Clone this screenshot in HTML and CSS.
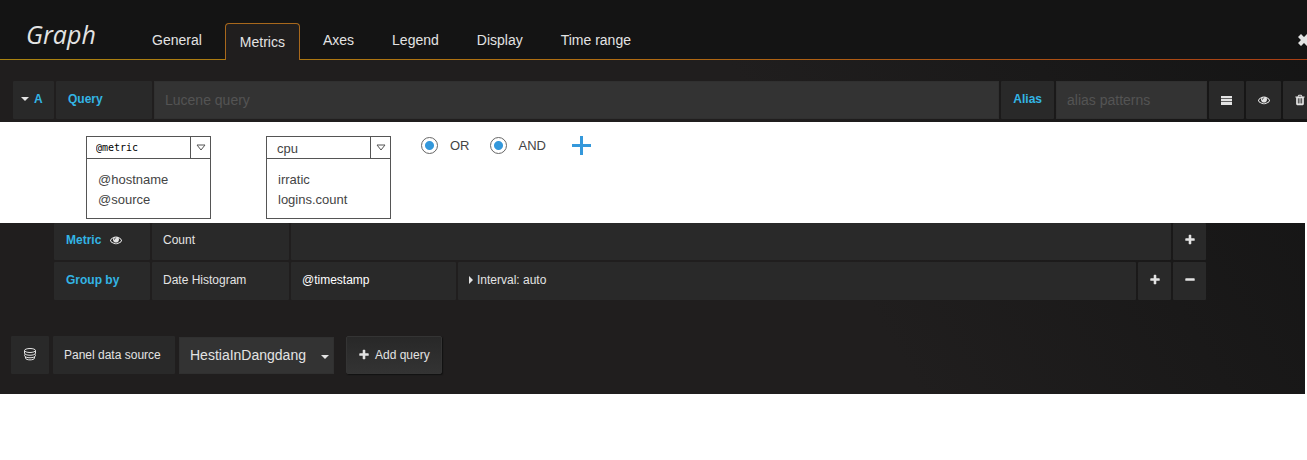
FILE: index.html
```html
<!DOCTYPE html>
<html lang="en">
<head>
<meta charset="utf-8">
<title>Graph - Metrics</title>
<link rel="stylesheet" href="styles.css">
</head>
<body>
<svg class="sprite" aria-hidden="true">
  <symbol id="eye" viewBox="0 0 1792 1792"><path d="M1664 960q-152-236-381-353 61 104 61 225 0 185-131.500 316.500t-316.500 131.500-316.500-131.500-131.500-316.500q0-121 61-225-229 117-381 353 133 205 333.500 326.500t434.500 121.500 434.500-121.500 333.500-326.500zm-720-384q0-20-14-34t-34-14q-125 0-214.500 89.500t-89.500 214.500q0 20 14 34t34 14 34-14 14-34q0-86 61-147t147-61q20 0 34-14t14-34zm848 384q0 34-20 69-140 230-376.500 368.500t-499.500 138.500-499.500-139-376.500-368q-20-35-20-69t20-69q140-229 376.500-368t499.500-139 499.500 139 376.500 368q20 35 20 69z"/></symbol>
  <symbol id="trash" viewBox="0 0 1792 1792"><path d="M704 1376v-704q0-14-9-23t-23-9h-64q-14 0-23 9t-9 23v704q0 14 9 23t23 9h64q14 0 23-9t9-23zm256 0v-704q0-14-9-23t-23-9h-64q-14 0-23 9t-9 23v704q0 14 9 23t23 9h64q14 0 23-9t9-23zm256 0v-704q0-14-9-23t-23-9h-64q-14 0-23 9t-9 23v704q0 14 9 23t23 9h64q14 0 23-9t9-23zm-544-992h448l-48-117q-7-9-17-11h-317q-10 2-17 11zm928 32v64q0 14-9 23t-23 9h-96v948q0 83-47 143.500t-113 60.500h-832q-66 0-113-58.500t-47-141.500v-952h-96q-14 0-23-9t-9-23v-64q0-14 9-23t23-9h309l70-167q15-37 54-63t79-26h320q40 0 79 26t54 63l70 167h309q14 0 23 9t9 23z"/></symbol>
  <symbol id="plus" viewBox="0 0 1792 1792"><path d="M1600 736v192q0 40-28 68t-68 28h-416v416q0 40-28 68t-68 28h-192q-40 0-68-28t-28-68v-416h-416q-40 0-68-28t-28-68v-192q0-40 28-68t68-28h416v-416q0-40 28-68t68-28h192q40 0 68 28t28 68v416h416q40 0 68 28t28 68z"/></symbol>
  <symbol id="minus" viewBox="0 0 1792 1792"><path d="M1600 736v192q0 40-28 68t-68 28h-1216q-40 0-68-28t-28-68v-192q0-40 28-68t68-28h1216q40 0 68 28t28 68z"/></symbol>
  <symbol id="bars" viewBox="0 0 12 12"><path d="M0 2h11v2H0zM0 5h11v2H0zM0 8h11v3H0z"/><path d="M0 4h11v1H0zM0 7h11v1H0z" opacity=".3"/></symbol>
  <symbol id="close" viewBox="0 0 14 14"><path d="M1 4 4 1l3 3 3-3 3 3-3 3 3 3-3 3-3-3-3 3-3-3 3-3z"/></symbol>
  <symbol id="down" viewBox="0 0 8 4"><path d="M0 0h8L4 4z"/></symbol>
  <symbol id="right" viewBox="0 0 4 8"><path d="M0 0v8l4-4z"/></symbol>
  <symbol id="outline-down" viewBox="0 0 10 7"><path d="M1 1h8L5 6z" fill="none" stroke="#555"/></symbol>
  <symbol id="database" viewBox="0 0 14 14"><g fill="none" stroke="currentColor"><ellipse cx="7" cy="3.500" rx="5.500" ry="2"/><path d="M1.500 3.500v2.500c0 3 11 3 11 0V3.500M1.500 7.500v1c0 3 11 3 11 0v-1M2.500 10v1c0 2.500 9 2.500 9 0v-1"/></g></symbol>
</svg>
<main class="editor">
  <header class="header">
    <h1 class="title">Graph</h1>
    <nav class="tabs">
      <a class="tab" href="#general">General</a>
      <a class="tab active" href="#metrics">Metrics</a>
      <a class="tab" href="#axes">Axes</a>
      <a class="tab" href="#legend">Legend</a>
      <a class="tab" href="#display">Display</a>
      <a class="tab" href="#time">Time range</a>
    </nav>
    <button class="close" aria-label="Close"><svg class="icon-large"><use href="#close"/></svg></button>
  </header>

  <section class="query-row">
    <button class="cell toggle"><svg class="caret"><use href="#down"/></svg>A</button>
    <label class="cell key name" for="query">Query</label>
    <input class="field grow" id="query" placeholder="Lucene query">
    <label class="cell key" for="alias">Alias</label>
    <input class="field alias" id="alias" placeholder="alias patterns">
    <button class="cell tool" aria-label="Menu"><svg class="icon"><use href="#bars"/></svg></button>
    <button class="cell tool" aria-label="Show or hide"><svg class="icon"><use href="#eye"/></svg></button>
    <button class="cell tool last" aria-label="Delete"><svg class="icon"><use href="#trash"/></svg></button>
  </section>

  <section class="filters">
    <div class="combo">
      <div class="combo-head">
        <select class="combo-select mono" aria-label="Field"><option>@metric</option></select>
        <span class="combo-arrow"><svg class="triangle"><use href="#outline-down"/></svg></span>
      </div>
      <ul class="combo-list"><li>@hostname</li><li>@source</li></ul>
    </div>
    <div class="combo">
      <div class="combo-head">
        <select class="combo-select" aria-label="Value"><option>cpu</option></select>
        <span class="combo-arrow"><svg class="triangle"><use href="#outline-down"/></svg></span>
      </div>
      <ul class="combo-list"><li>irratic</li><li>logins.count</li></ul>
    </div>
    <div class="choices">
      <label class="choice"><input class="radio" type="radio" name="or" checked>OR</label>
      <label class="choice"><input class="radio" type="radio" name="and" checked>AND</label>
      <button class="add" aria-label="Add condition"><svg class="add-icon" viewBox="0 0 19 19"><path d="M8 0h3v8h8v3h-8v8H8v-8H0V8h8z"/></svg></button>
    </div>
  </section>

  <section class="lower">
    <div class="rows">
      <div class="row first">
        <span class="cell key name">Metric<svg class="icon light"><use href="#eye"/></svg></span>
        <span class="cell type">Count</span>
        <span class="cell grow"></span>
        <button class="cell small" aria-label="Add metric"><svg class="icon"><use href="#plus"/></svg></button>
      </div>
      <div class="row">
        <span class="cell key name">Group by</span>
        <span class="cell type">Date Histogram</span>
        <span class="cell stamp">@timestamp</span>
        <button class="cell grow"><svg class="caret-right"><use href="#right"/></svg>Interval: auto</button>
        <button class="cell small" aria-label="Add group"><svg class="icon"><use href="#plus"/></svg></button>
        <button class="cell small" aria-label="Remove group"><svg class="icon"><use href="#minus"/></svg></button>
      </div>
    </div>
    <div class="source">
      <span class="cell source-icon"><svg class="icon-large"><use href="#database"/></svg></span>
      <label class="cell source-label" for="source">Panel data source</label>
      <span class="source-box">
        <select class="field source-select" id="source"><option>HestiaInDangdang</option></select>
        <svg class="caret source-caret"><use href="#down"/></svg>
      </span>
      <button class="add-query"><svg class="icon"><use href="#plus"/></svg>Add query</button>
    </div>
  </section>
</main>
</body>
</html>
```

FILE: styles.css
```css
* { box-sizing: border-box; }
body {
  margin: 0;
  background: #fff;
  color: #e3e3e3;
  font: 12px/16px "Liberation Sans", Arial, sans-serif;
}
button, input, select {
  margin: 0;
  border: 0;
  border-radius: 0;
  background: none;
  color: inherit;
  font: inherit;
  appearance: none;
}
svg { flex: none; fill: currentColor; }
.sprite { position: absolute; width: 0; height: 0; }
.icon { width: 12px; height: 12px; }
.icon-large { width: 14px; height: 14px; }
.light { margin-left: 9px; color: #e3e3e3; }
.caret { width: 8px; height: 4px; color: #e3e3e3; }
.caret-right { width: 4px; height: 8px; }

.editor {
  overflow: hidden;
  background: linear-gradient(60deg, #201e1e 60%, #141414 100%);
}

.header {
  display: flex;
  height: 60px;
  border-bottom: 1px solid;
  border-image: linear-gradient(90deg, #a98310, #b06a12 50%, #a83e14) 1;
  background: #141414;
}
.title {
  width: 137px;
  margin: 0;
  padding: 18px 0 0 26px;
  font: italic 25px/32px "Open Sans", sans-serif;
}
.tabs { display: flex; flex: 1; gap: 8px; }
.tab {
  padding: 31px 15px 0;
  color: #e3e3e3;
  font-size: 14px;
  line-height: 18px;
  text-decoration: none;
  white-space: nowrap;
}
.tab.active {
  height: 37px;
  margin-top: 23px;
  padding: 9px 14px 0;
  border: 1px solid #a8681c;
  border-bottom: 0;
  border-radius: 4px 4px 0 0;
  background: #201e1e;
}
.close {
  display: flex;
  margin: 33px -4px 0 0;
  padding: 0;
}

.cell {
  display: flex;
  align-items: center;
  min-height: 38px;
  padding: 0 12px 2px;
  border-radius: 1px;
  background: #292929;
  white-space: nowrap;
}
.key { padding: 0 12px 2px; color: #33b5e5; font-weight: bold; }
.name { width: 96px; }
.grow { flex: 1; min-width: 0; }
.field {
  padding: 0 10px;
  border: 1px solid #303030;
  background: #333;
  font-size: 14px;
}
.field::placeholder { color: #545454; opacity: 1; }

.query-row {
  display: flex;
  gap: 2px;
  margin-right: -9px;
  padding: 21px 0 3px 13px;
}
.toggle { gap: 5px; width: 41px; padding: 0 8px 2px; color: #33b5e5; font-weight: bold; }
.alias { width: 151px; }
.tool { justify-content: center; width: 35px; padding: 0; }
.last { width: 33px; }

.filters {
  display: flex;
  gap: 55px;
  padding: 14px 86px 4px;
  background: #fff;
  color: #444;
  font-size: 13px;
}
.combo { width: 125px; border: 1px solid #555; }
.combo-head { display: flex; height: 22px; border-bottom: 1px solid #555; }
.combo-select { flex: 1; min-width: 0; padding: 2px 10px 0; }
.mono { padding: 0 9px; color: #000; font: 10px "DejaVu Sans Mono", monospace; }
.combo-arrow {
  display: flex;
  align-items: center;
  justify-content: center;
  width: 20px;
  border-left: 1px solid #555;
}
.triangle { width: 10px; height: 7px; }
.combo-list {
  margin: 0;
  padding: 11px 11px 8px;
  line-height: 20px;
  list-style: none;
}
.choices { display: flex; align-items: center; height: 19px; margin-left: -25px; }
.choice { display: flex; align-items: center; gap: 12px; margin-right: 20px; }
.radio {
  width: 17px;
  height: 17px;
  border: 1px solid #666;
  border-radius: 50%;
  background: radial-gradient(circle, #3498db 4px, #fff 5px);
}
.add { display: flex; margin-left: 6px; padding: 0; color: #3498db; }
.add-icon { width: 19px; height: 19px; }

.lower { padding-bottom: 20px; border-right: 2px solid #fff; }
.rows { display: grid; gap: 2px; margin: 0 99px 0 54px; }
.row { display: flex; gap: 2px; }
.row > .cell { padding-left: 11px; }
.row > .key { padding-left: 12px; }
.first > .cell { min-height: 37px; padding-bottom: 4px; }
.type { width: 137px; }
.stamp { width: 165px; color: #fff; }
.row > .grow { gap: 4px; }
.row > .small { justify-content: center; width: 33px; padding: 0 0 2px; }
.first > .small { padding-bottom: 4px; }

.source { display: flex; gap: 4px; margin: 36px 0 0 11px; }
.source-icon { width: 38px; }
.source-label { width: 122px; padding: 0 11px; }
.source-box { display: grid; align-items: center; width: 155px; }
.source-select { grid-area: 1 / 1; height: 37px; width: 100%; }
.source-caret { grid-area: 1 / 1; margin: 3px 5px 0 0; justify-self: end; pointer-events: none; }
.add-query {
  display: flex;
  align-items: center;
  gap: 5px;
  height: 38px;
  margin-left: 8px;
  padding: 0 11px;
  border: 1px solid #343434;
  border-radius: 2px;
  background: linear-gradient(#282828, #333);
  box-shadow: 1px 1px 1px #111;
}
```
